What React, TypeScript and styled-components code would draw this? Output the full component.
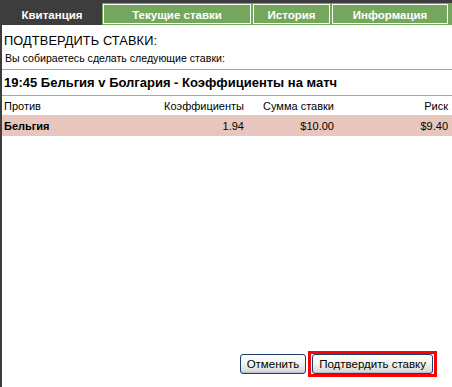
import React from "react";
import styled, { createGlobalStyle } from "styled-components";

const Global = createGlobalStyle`
  html, body { margin: 0; padding: 0; background: #ffffff; }
  body { font-family: "Liberation Sans", Arial, sans-serif; }
`;

const DARK = "#3d3d3d";
const GREEN = "#74a65e";
const RULE = "#b0a2a8";

const Frame = styled.div`
  box-sizing: border-box;
  height: 387px;
  width: 452px;
  border-left: 2px solid ${DARK};
  display: flex;
  flex-direction: column;
  background: #fff;
  color: #000;
`;

const TabBar = styled.div`
  display: flex;
  height: 25px;
  padding-top: 3px;
  box-sizing: border-box;
  background: linear-gradient(${DARK} 0 3px, ${GREEN} 3px);
`;

const Tab = styled.div<{ $w: number; $active?: boolean }>`
  box-sizing: border-box;
  width: ${(p) => p.$w}px;
  height: 22px;
  display: flex;
  align-items: center;
  justify-content: center;
  font-weight: bold;
  font-size: 11.5px;
  color: #fff;
  background: ${(p) => (p.$active ? DARK : GREEN)};
  box-shadow: ${(p) =>
    p.$active ? "none" : `inset 0 0 0 1px ${GREEN}, inset 0 0 0 2px #ffffff`};
  padding-top: 1px;
`;

const Content = styled.div`
  flex: 1;
  display: flex;
  flex-direction: column;
`;

const Heading = styled.div`
  font-size: 12.8px;
  padding: 8px 0 0 2px;
  height: 15px;
  line-height: 15px;
  letter-spacing: 0.1px;
`;

const Intro = styled.div`
  font-size: 10.6px;
  padding: 3px 0 0 3px;
  height: 15px;
  line-height: 15px;
  border-bottom: 1px solid ${RULE};
  padding-bottom: 3px;
`;

const MatchTitle = styled.div`
  font-weight: bold;
  font-size: 13px;
  padding: 0 0 0 2px;
  height: 25px;
  line-height: 25px;
  border-bottom: 1px solid ${RULE};
`;

const Row = styled.div<{ $pink?: boolean }>`
  display: grid;
  grid-template-columns: 130px 110px 90px 114px;
  align-items: center;
  height: ${(p) => (p.$pink ? 21 : 19)}px;
  padding: 0 4px 0 2px;
  font-size: 11px;
  background: ${(p) => (p.$pink ? "#e8c6be" : "transparent")};
`;

const Cell = styled.div<{ $right?: boolean; $bold?: boolean }>`
  text-align: ${(p) => (p.$right ? "right" : "left")};
  font-weight: ${(p) => (p.$bold ? "bold" : "normal")};
  white-space: nowrap;
`;

const Spacer = styled.div`
  flex: 1;
`;

const Footer = styled.div`
  display: flex;
  justify-content: flex-end;
  align-items: center;
  gap: 2px;
  padding: 0 15px 10px 0;
`;

const Button = styled.button`
  box-sizing: border-box;
  height: 20px;
  padding: 0 6px;
  font-family: "Liberation Sans", Arial, sans-serif;
  font-size: 11.5px;
  color: #000;
  border: 1px solid #1f3f73;
  border-radius: 3px;
  background: linear-gradient(#ffffff 0%, #f3f3ee 50%, #e2e1dc 80%, #c9d2e4 100%);
  box-shadow: inset 0 -1px 0 #b4c0d8;
  cursor: pointer;
`;

const Highlight = styled.div`
  box-sizing: border-box;
  border: 3px solid #ff0000;
  padding: 0 1px;
  height: 26px;
  display: flex;
  align-items: center;
`;

export default function App() {
  return (
    <>
      <Global />
      <Frame>
        <TabBar>
          <Tab $w={100} $active>Квитанция</Tab>
          <Tab $w={150}>Текущие ставки</Tab>
          <Tab $w={79}>История</Tab>
          <Tab $w={118}>Информация</Tab>
        </TabBar>
        <Content>
          <Heading>ПОДТВЕРДИТЬ СТАВКИ:</Heading>
          <Intro>Вы собираетесь сделать следующие ставки:</Intro>
          <MatchTitle>19:45 Бельгия v Болгария - Коэффициенты на матч</MatchTitle>
          <Row>
            <Cell>Против</Cell>
            <Cell $right>Коэффициенты</Cell>
            <Cell $right>Сумма ставки</Cell>
            <Cell $right>Риск</Cell>
          </Row>
          <Row $pink>
            <Cell $bold>Бельгия</Cell>
            <Cell $right>1.94</Cell>
            <Cell $right>$10.00</Cell>
            <Cell $right>$9.40</Cell>
          </Row>
          <Spacer />
          <Footer>
            <Button>Отменить</Button>
            <Highlight>
              <Button>Подтвердить ставку</Button>
            </Highlight>
          </Footer>
        </Content>
      </Frame>
    </>
  );
}
